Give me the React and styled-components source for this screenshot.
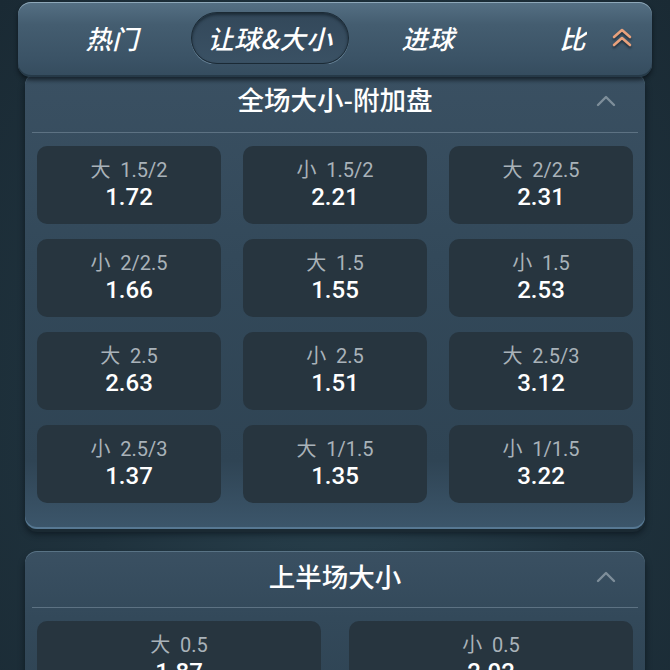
import React from "react";
import styled, { createGlobalStyle } from "styled-components";

const Global = createGlobalStyle`
  html, body { margin: 0; padding: 0; }
  body {
    background: #1e2f3a;
    font-family: "Roboto", "Noto Sans CJK SC", sans-serif;
    overflow: hidden;
  }
`;

const Page = styled.div`
  width: 670px;
  height: 670px;
  overflow: hidden;
  box-sizing: border-box;
  padding: 2px 18px 0 18px;
  background: radial-gradient(ellipse at 50% 60%, #2a4350 0%, #1f323d 55%, #1a2a34 100%);
  display: flex;
  flex-direction: column;
`;

const TabBar = styled.div`
  position: relative;
  z-index: 2;
  height: 75px;
  border-radius: 13px;
  background: linear-gradient(180deg, #557084 0%, #445d70 30%, #3b5366 75%, #354c5e 100%);
  box-shadow: inset 0 1px 0 rgba(190, 215, 230, 0.55), inset 0 -2px 0 rgba(20, 35, 45, 0.45),
    0 3px 4px rgba(8, 16, 22, 0.7);
  display: flex;
  align-items: center;
  flex-shrink: 0;
`;

const TabStrip = styled.div`
  display: flex;
  align-items: center;
  padding-left: 15px;
  width: 554px;
  overflow: hidden;
  flex-shrink: 0;
  margin-top: -3px;
`;

const Tab = styled.div`
  width: 158px;
  flex-shrink: 0;
  height: 52px;
  box-sizing: border-box;
  display: flex;
  align-items: center;
  justify-content: center;
  padding-bottom: 2px;
  color: #ffffff;
  font-family: "Noto Sans CJK SC", sans-serif;
  font-size: 26px;
  font-weight: 500;
  font-style: italic;
  letter-spacing: 0.5px;
  border-radius: 26px;
  ${(p) =>
    p.$active &&
    `
    background: linear-gradient(180deg, #33485a 0%, #3a5164 100%);
    border: 1.5px solid #1b2a35;
    box-shadow: inset 0 2px 3px rgba(10, 20, 28, 0.55), 0 1px 0 rgba(140, 170, 190, 0.55);
  `}
`;

const ExpandButton = styled.div`
  flex: 1;
  display: flex;
  align-items: center;
  justify-content: center;
  padding-left: 4px;
  margin-top: -3px;
  svg { filter: drop-shadow(0 2px 1px rgba(10, 20, 28, 0.6)); }
`;

const Cards = styled.div`
  padding: 0 7px;
  display: flex;
  flex-direction: column;
  gap: 22px;
`;

const Card = styled.div`
  border-radius: 12px;
  background: linear-gradient(180deg, #3a5062 0%, #33495a 40%, #2f4454 85%, #3c566b 100%);
  box-shadow: inset 0 1px 0 rgba(150, 180, 200, 0.35), inset 0 -2px 0 rgba(110, 150, 180, 0.55),
    0 3px 0 #1a2932, 0 5px 6px rgba(5, 12, 18, 0.6);
  padding: 0 7px ${(p) => p.$bottom}px 7px;
  margin-top: ${(p) => p.$top}px;
`;

const CardHeader = styled.div`
  position: relative;
  height: ${(p) => p.$h}px;
  display: flex;
  align-items: center;
  justify-content: center;
  border-bottom: 1.5px solid #5d7283;
`;

const CardTitle = styled.div`
  color: #ffffff;
  font-family: "Noto Sans CJK SC", sans-serif;
  font-size: 26.5px;
  font-weight: 500;
  margin-top: ${(p) => p.$shift}px;
`;

const Collapse = styled.div`
  position: absolute;
  right: 22px;
  top: 50%;
  transform: translateY(-50%);
  display: flex;
`;

const Grid = styled.div`
  display: grid;
  grid-template-columns: repeat(${(p) => p.$cols}, 1fr);
  column-gap: ${(p) => p.$gap}px;
  row-gap: 15px;
  padding: 13px 5px 0 5px;
`;

const Cell = styled.div`
  height: 78px;
  border-radius: 10px;
  background: #27353f;
  display: flex;
  flex-direction: column;
  align-items: center;
  justify-content: center;
`;

const Label = styled.div`
  color: #a9b2b9;
  font-size: 20px;
  line-height: 24px;
  word-spacing: 5px;
  font-family: "Roboto", "Noto Sans CJK SC", sans-serif;
`;

const Value = styled.div`
  color: #ffffff;
  font-size: 24px;
  line-height: 30px;
  font-weight: 500;
  font-family: "Roboto", "Noto Sans CJK SC", sans-serif;
`;

const Chevron = ({ color }) => (
  <svg width="20" height="12" viewBox="0 0 20 12">
    <path d="M2 10 L10 2 L18 10" fill="none" stroke={color} strokeWidth="2.4" strokeLinecap="round" strokeLinejoin="round" />
  </svg>
);

const DoubleChevron = () => (
  <svg width="22" height="22" viewBox="0 0 22 22">
    <path d="M3 10 L11 3 L19 10" fill="none" stroke="#e8a17c" strokeWidth="2.6" strokeLinecap="round" strokeLinejoin="round" />
    <path d="M3 18 L11 11 L19 18" fill="none" stroke="#e8a17c" strokeWidth="2.6" strokeLinecap="round" strokeLinejoin="round" />
  </svg>
);

const tabs = ["热门", "让球&大小", "进球", "比分"];

const extra = [
  ["大 1.5/2", "1.72"], ["小 1.5/2", "2.21"], ["大 2/2.5", "2.31"],
  ["小 2/2.5", "1.66"], ["大 1.5", "1.55"], ["小 1.5", "2.53"],
  ["大 2.5", "2.63"], ["小 2.5", "1.51"], ["大 2.5/3", "3.12"],
  ["小 2.5/3", "1.37"], ["大 1/1.5", "1.35"], ["小 1/1.5", "3.22"],
];

const half = [["大 0.5", "1.87"], ["小 0.5", "2.02"]];

export default function App() {
  return (
    <>
      <Global />
      <Page>
        <TabBar>
          <TabStrip>
            {tabs.map((t, i) => (
              <Tab key={t} $active={i === 1}>{t}</Tab>
            ))}
          </TabStrip>
          <ExpandButton>
            <DoubleChevron />
          </ExpandButton>
        </TabBar>
        <Cards>
          <Card $top={-4} $bottom={26}>
            <CardHeader $h={59}>
              <CardTitle $shift={-9}>全场大小-附加盘</CardTitle>
              <Collapse style={{ marginTop: -2 }}>
                <Chevron color="#7e8e9a" />
              </Collapse>
            </CardHeader>
            <Grid $cols={3} $gap={22}>
              {extra.map(([l, v]) => (
                <Cell key={l}>
                  <Label>{l}</Label>
                  <Value>{v}</Value>
                </Cell>
              ))}
            </Grid>
          </Card>
          <Card $top={0} $bottom={20}>
            <CardHeader $h={56}>
              <CardTitle $shift={-8}>上半场大小</CardTitle>
              <Collapse style={{ marginTop: -2 }}>
                <Chevron color="#7e8e9a" />
              </Collapse>
            </CardHeader>
            <Grid $cols={2} $gap={28}>
              {half.map(([l, v]) => (
                <Cell key={l}>
                  <Label>{l}</Label>
                  <Value>{v}</Value>
                </Cell>
              ))}
            </Grid>
          </Card>
        </Cards>
      </Page>
    </>
  );
}
